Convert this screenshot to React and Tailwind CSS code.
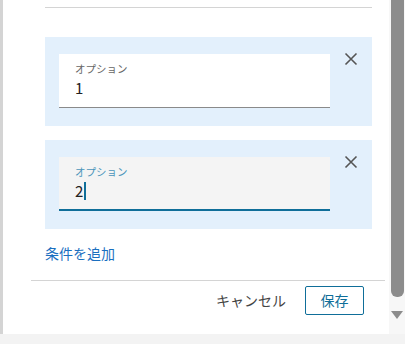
import React from "react";

const XIcon = () => (
  <svg width="14" height="14" viewBox="0 0 14 14" className="text-[#555]">
    <path d="M1.5 1.5 L12.5 12.5 M12.5 1.5 L1.5 12.5" stroke="currentColor" strokeWidth="1.6" />
  </svg>
);

const OptionCard = ({ value, focused }) => (
  <div className="flex bg-[#e3f0fc] pt-[17px] pb-[18px] pl-[14px]">
    <div
      className={
        focused
          ? "w-[271px] h-[54px] bg-[#f4f4f4] border-b-2 border-[#0f6e99] pl-[16px] pt-[7px]"
          : "w-[271px] h-[54px] bg-white border-b border-[#8a8a8a] pl-[16px] pt-[7px]"
      }
    >
      <div className={focused ? "text-[10.5px] leading-[16px] text-[#4b95ba]" : "text-[10.5px] leading-[16px] text-[#666]"}>
        オプション
      </div>
      <div className="flex items-center h-[22px] text-[15px] text-[#222]">
        {value}
        {focused && <span className="w-[2px] h-[18px] bg-[#0f6e99] ml-px" />}
      </div>
    </div>
    <div className="ml-[14px] -mt-[2px]">
      <XIcon />
    </div>
  </div>
);

const App = () => {
  return (
    <div
      className="w-[405px] h-[344px] flex flex-col bg-[#f3f3f3] overflow-hidden"
      style={{ fontFamily: '"Noto Sans CJK JP", "Noto Sans", sans-serif' }}
    >
      <div className="flex h-[334px]">
        <div className="w-[3px] bg-[#d4d4d4]" />
        <div className="w-[386px] bg-white flex flex-col">
          <div className="pl-[42px] pr-[17px]">
            <div className="h-[7px]" />
            <div className="h-px bg-[#d4d4d4]" />
            <div className="h-[29px]" />
            <OptionCard value="1" />
            <div className="h-[14px]" />
            <OptionCard value="2" focused />
            <div className="h-[14px]" />
            <div className="text-[14px] leading-[20px] text-[#1b6fbf]">条件を追加</div>
          </div>
          <div className="ml-[28px] mr-[4px] mt-[17px] h-px bg-[#d4d4d4]" />
          <div className="flex justify-end items-center pr-[25px] pt-[5px] gap-[19px]">
            <span className="text-[14px] text-[#444]">キャンセル</span>
            <button className="w-[59px] h-[29px] border border-[#0f6e99] rounded-[2px] text-[14px] text-[#0f6e99]">
              保存
            </button>
          </div>
        </div>
        <div className="w-[16px] bg-[#f7f7f7] flex flex-col items-center">
          <div className="w-[13px] h-[297px] bg-[#8c8c8c] rounded-b-[6px]" />
          <div className="mt-[14px] w-0 h-0 border-l-[6px] border-r-[6px] border-t-[8px] border-l-transparent border-r-transparent border-t-[#8c8c8c]" />
        </div>
      </div>
    </div>
  );
};

export default App;
